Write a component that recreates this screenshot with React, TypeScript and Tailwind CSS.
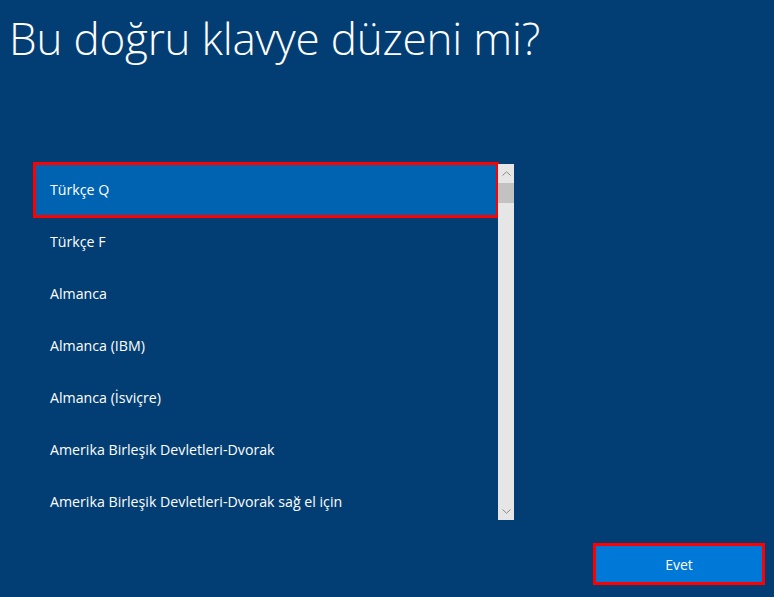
const layouts = [
  "Türkçe Q",
  "Türkçe F",
  "Almanca",
  "Almanca (IBM)",
  "Almanca (İsviçre)",
  "Amerika Birleşik Devletleri-Dvorak",
  "Amerika Birleşik Devletleri-Dvorak sağ el için",
];

export default function App() {
  return (
    <div
      className="w-[774px] h-[597px] bg-[#023e73] text-white flex flex-col overflow-hidden"
      style={{ fontFamily: '"Open Sans", "Noto Sans", sans-serif' }}
    >
      {/* Title */}
      <h1 className="pl-[9px] pt-[12px] text-[44px] font-light leading-[52px] tracking-[-0.2px]">
        Bu doğru klavye düzeni mi?
      </h1>

      {/* Layout list */}
      <div className="mt-[100px] ml-[34px] flex w-[480px] h-[356px]">
        <ul className="flex-1 flex flex-col">
          {layouts.map((name, i) => (
            <li key={name} className="h-[52px] shrink-0 flex items-stretch">
              <div
                className={
                  i === 0
                    ? "flex-1 my-[1px] ml-[2px] mr-[2px] bg-[#0063b1] outline-[3px] outline-solid outline-[#ff0000] flex items-center pl-[14px] text-[14.2px]"
                    : "flex-1 flex items-center pl-[16px] text-[14.2px]"
                }
              >
                {name}
              </div>
            </li>
          ))}
        </ul>

        {/* Scrollbar */}
        <div className="w-[16px] bg-[#e6e6e6] flex flex-col">
          <div className="h-[19px] flex items-center justify-center">
            <svg width="9" height="5" viewBox="0 0 9 5" fill="none">
              <path d="M0.5 4.5 L4.5 0.8 L8.5 4.5" stroke="#8a8a8a" strokeWidth="1" />
            </svg>
          </div>
          <div className="h-[20px] bg-[#c2c2c2]" />
          <div className="flex-1" />
          <div className="h-[17px] flex items-center justify-center">
            <svg width="9" height="5" viewBox="0 0 9 5" fill="none">
              <path d="M0.5 0.5 L4.5 4.2 L8.5 0.5" stroke="#8a8a8a" strokeWidth="1" />
            </svg>
          </div>
        </div>
      </div>

      {/* Footer */}
      <div className="flex justify-end pr-[12px] mt-[26px]">
        <button className="w-[166px] h-[36px] bg-[#0078d7] outline-[3px] outline-solid outline-[#ff0000] text-[14px] text-white">
          Evet
        </button>
      </div>
    </div>
  );
}
